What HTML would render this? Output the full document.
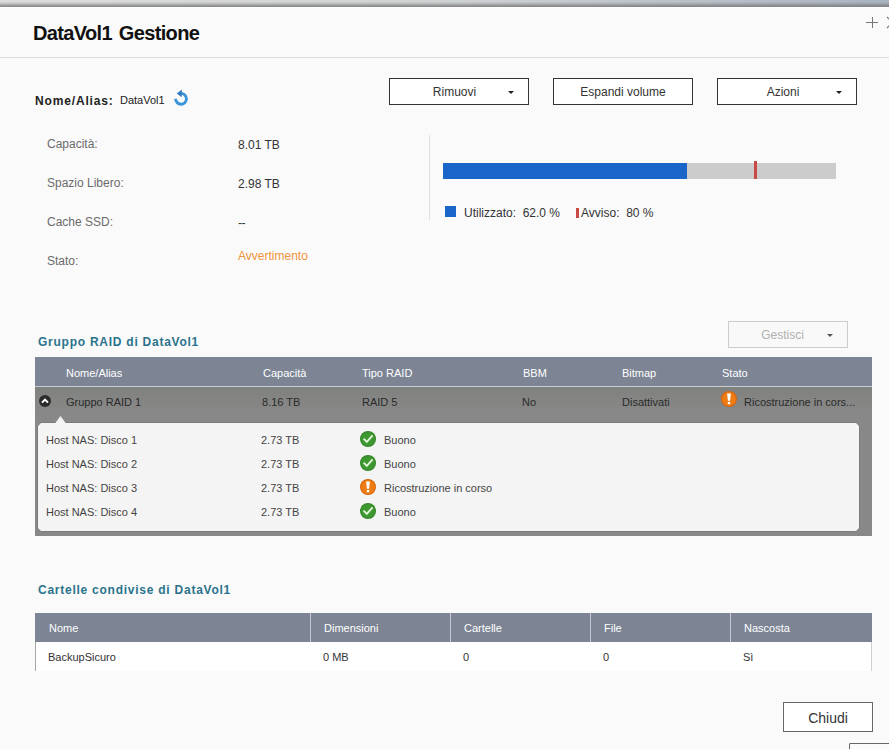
<!DOCTYPE html>
<html><head><meta charset="utf-8">
<style>
*{margin:0;padding:0;box-sizing:border-box}
html,body{width:889px;height:749px;overflow:hidden;background:#fafafa;font-family:"Liberation Sans",sans-serif;color:#333}
.a{position:absolute;white-space:nowrap}
#topbar{position:absolute;left:0;top:0;width:889px;height:8px;
 background:linear-gradient(to bottom,rgba(255,255,255,0) 0,rgba(255,255,255,0) 2px,rgba(0,0,0,0) 2px),linear-gradient(to right,#dcdcdc,#cfd2d3 50%,#a9b3c0)}
#topshade{position:absolute;left:0;top:0;width:889px;height:7px;background:linear-gradient(to bottom,rgba(120,120,120,0) 0,rgba(120,120,120,0) 2px,rgba(120,120,120,.9) 7px)}
#topwhite{position:absolute;left:0;top:7px;width:889px;height:1px;background:#fff}
.title{left:33px;top:22px;font-size:20px;font-weight:bold;color:#111;letter-spacing:-0.65px;word-spacing:2px}
.hr{position:absolute;left:0;top:57px;width:889px;height:1px;background:#dcdcdc}
.btn{position:absolute;height:27px;background:#fff;border:1px solid #333;font-size:12px;color:#333;text-align:center;line-height:25px}
.caret{position:absolute;width:0;height:0;border-left:3px solid transparent;border-right:3px solid transparent;border-top:3px solid #222}
.lbl{font-size:12px;color:#6b6b6b}
.val{font-size:12px;color:#333}
.sect{font-size:12px;font-weight:bold;color:#2a738c;letter-spacing:0.75px}
.th{font-size:11px;color:#fff}
.td{font-size:11px;color:#444}
</style></head><body>
<div id="topbar"></div><div id="topshade"></div><div id="topwhite"></div>
<div class="a title">DataVol1 Gestione</div>
<div class="hr"></div>

<!-- close/plus -->
<div style="position:absolute;left:866px;top:22px;width:12px;height:1px;background:#777"></div>
<div style="position:absolute;left:872px;top:17px;width:1px;height:11px;background:#777"></div>
<svg class="a" style="left:880px;top:10px" width="9" height="25" viewBox="880 10 9 25"><path d="M887 17 L898 28 M887 28 L898 17" stroke="#777" stroke-width="1.2"/></svg>

<div class="a" style="left:35px;top:94px;font-size:12px;font-weight:bold;color:#222;letter-spacing:0.85px">Nome/Alias:</div>
<div class="a" style="left:120px;top:94px;font-size:11px;color:#222">DataVol1</div>
<svg class="a" style="left:168px;top:86px" width="26" height="24" viewBox="168 86 26 24"><path d="M175.6 98.8 A5.4 5.4 0 1 0 181 93.4" stroke="#3a94da" stroke-width="2.9" fill="none"/><path d="M176.8 93.4 L181.9 89.6 L181.7 97.2 Z" fill="#3379c0"/></svg>

<div class="btn" style="left:389px;top:78px;width:140px;padding-right:9px;line-height:27px">Rimuovi</div>
<div class="caret" style="left:508px;top:91px"></div>
<div class="btn" style="left:553px;top:78px;width:140px;line-height:27px">Espandi volume</div>
<div class="btn" style="left:717px;top:78px;width:140px;padding-right:8px;line-height:27px">Azioni</div>
<div class="caret" style="left:836px;top:91px"></div>

<div class="a lbl" style="left:47px;top:137px">Capacità:</div>
<div class="a lbl" style="left:47px;top:176px">Spazio Libero:</div>
<div class="a lbl" style="left:47px;top:215px">Cache SSD:</div>
<div class="a lbl" style="left:47px;top:254px">Stato:</div>
<div class="a val" style="left:238px;top:138px">8.01 TB</div>
<div class="a val" style="left:238px;top:177px">2.98 TB</div>
<div class="a val" style="left:238px;top:216px;letter-spacing:-0.6px">--</div>
<div class="a val" style="left:238px;top:249px;color:#f0943a">Avvertimento</div>

<div style="position:absolute;left:429px;top:135px;width:1px;height:85px;background:#e0e0e0"></div>
<div style="position:absolute;left:443px;top:163px;width:393px;height:16px;background:#cccccc"></div>
<div style="position:absolute;left:443px;top:163px;width:244px;height:16px;background:#1a66c8"></div>
<div style="position:absolute;left:754px;top:161px;width:3px;height:18px;background:#c94a44"></div>
<div style="position:absolute;left:445px;top:206px;width:11px;height:11px;background:#1a66c8"></div>
<div class="a val" style="left:464px;top:206px">Utilizzato:&nbsp; 62.0 %</div>
<div style="position:absolute;left:576px;top:208px;width:3px;height:10px;background:#c94a44"></div>
<div class="a val" style="left:581px;top:206px">Avviso:&nbsp; 80 %</div>

<div class="a sect" style="left:38px;top:335px">Gruppo RAID di DataVol1</div>
<div class="btn" style="left:728px;top:321px;width:120px;height:27px;border-color:#ccc;color:#b0b0b0;background:#f9f9f9;padding-right:11px;line-height:26px">Gestisci</div>
<div class="caret" style="left:827px;top:334px;border-top-color:#555"></div>


<!-- RAID table -->
<div style="position:absolute;left:35px;top:357px;width:837px;height:29px;background:#7d8595"></div>
<div style="position:absolute;left:35px;top:386px;width:837px;height:1px;background:#c9ccd2"></div>
<div style="position:absolute;left:35px;top:387px;width:837px;height:149px;background:linear-gradient(to bottom,#7f817e 0,#858684 14px,#878887 30px)"></div>
<div class="a th" style="left:66px;top:367px">Nome/Alias</div>
<div class="a th" style="left:263px;top:367px">Capacità</div>
<div class="a th" style="left:362px;top:367px">Tipo RAID</div>
<div class="a th" style="left:523px;top:367px">BBM</div>
<div class="a th" style="left:622px;top:367px">Bitmap</div>
<div class="a th" style="left:722px;top:367px">Stato</div>
<div style="position:absolute;left:39px;top:395px;width:12px;height:12px;border-radius:50%;background:#2b2b2b"></div>
<svg style="position:absolute;left:39px;top:395px" width="12" height="12" viewBox="0 0 12 12"><path d="M3 7.6 L6 4.6 L9 7.6" stroke="#fff" stroke-width="2" fill="none"/></svg>
<div class="a td" style="left:66px;top:396px;color:#2a2a2a">Gruppo RAID 1</div>
<div class="a td" style="left:262px;top:396px;color:#2a2a2a">8.16 TB</div>
<div class="a td" style="left:362px;top:396px;color:#2a2a2a">RAID 5</div>
<div class="a td" style="left:522px;top:396px;color:#2a2a2a">No</div>
<div class="a td" style="left:622px;top:396px;color:#2a2a2a">Disattivati</div>
<svg class="a" style="left:721px;top:391px" width="16" height="16" viewBox="0 0 16 16"><circle cx="8" cy="8" r="8" fill="#d8640a"/><circle cx="8" cy="8" r="7" fill="#ee7b14"/><path d="M6.1 2.6 L9.9 2.6 L9.1 9.8 L6.9 9.8 Z" fill="#fff"/><rect x="6.8" y="10.9" width="2.4" height="2.3" fill="#fff"/></svg>
<div class="a td" style="left:744px;top:396px;color:#2a2a2a">Ricostruzione in cors...</div>

<div style="position:absolute;left:37px;top:422px;width:823px;height:110px;background:#7b7d7c;clip-path:polygon(4px 0,calc(100% - 4px) 0,100% 4px,100% calc(100% - 5px),calc(100% - 5px) 100%,5px 100%,0 calc(100% - 5px),0 4px)"></div>
<div style="position:absolute;left:38px;top:423px;width:821px;height:108px;background:#f4f4f4;clip-path:polygon(3px 0,calc(100% - 3px) 0,100% 3px,100% calc(100% - 3px),calc(100% - 3px) 100%,3px 100%,0 calc(100% - 3px),0 3px)"></div>
<svg class="a" style="left:55px;top:416px" width="11" height="8" viewBox="0 0 11 8"><path d="M0 7.5 L5.5 0 L11 7.5 Z" fill="#f4f4f4"/></svg>

<div class="a td" style="left:46px;top:434px">Host NAS: Disco 1</div>
<div class="a td" style="left:46px;top:458px">Host NAS: Disco 2</div>
<div class="a td" style="left:46px;top:482px">Host NAS: Disco 3</div>
<div class="a td" style="left:46px;top:506px">Host NAS: Disco 4</div>
<div class="a td" style="left:261px;top:434px">2.73 TB</div>
<div class="a td" style="left:261px;top:458px">2.73 TB</div>
<div class="a td" style="left:261px;top:482px">2.73 TB</div>
<div class="a td" style="left:261px;top:506px">2.73 TB</div>
<svg class="a ok" style="left:360px;top:431px" width="16" height="16" viewBox="0 0 16 16"><circle cx="8" cy="8" r="8" fill="#2f8424"/><circle cx="8" cy="8" r="7" fill="#3c982f"/><path d="M3.6 7.6 L6.8 10.9 L12.6 4.3" stroke="#e2f7d8" stroke-width="1.9" fill="none"/></svg>
<svg class="a ok" style="left:360px;top:455px" width="16" height="16" viewBox="0 0 16 16"><circle cx="8" cy="8" r="8" fill="#2f8424"/><circle cx="8" cy="8" r="7" fill="#3c982f"/><path d="M3.6 7.6 L6.8 10.9 L12.6 4.3" stroke="#e2f7d8" stroke-width="1.9" fill="none"/></svg>
<svg class="a" style="left:360px;top:479px" width="16" height="16" viewBox="0 0 16 16"><circle cx="8" cy="8" r="8" fill="#d8640a"/><circle cx="8" cy="8" r="7" fill="#ee7b14"/><path d="M6.1 2.6 L9.9 2.6 L9.1 9.8 L6.9 9.8 Z" fill="#fff"/><rect x="6.8" y="10.9" width="2.4" height="2.3" fill="#fff"/></svg>
<svg class="a ok" style="left:360px;top:503px" width="16" height="16" viewBox="0 0 16 16"><circle cx="8" cy="8" r="8" fill="#2f8424"/><circle cx="8" cy="8" r="7" fill="#3c982f"/><path d="M3.6 7.6 L6.8 10.9 L12.6 4.3" stroke="#e2f7d8" stroke-width="1.9" fill="none"/></svg>
<div class="a td" style="left:384px;top:434px">Buono</div>
<div class="a td" style="left:384px;top:458px">Buono</div>
<div class="a td" style="left:384px;top:482px">Ricostruzione in corso</div>
<div class="a td" style="left:384px;top:506px">Buono</div>

<!-- shared folders -->
<div class="a sect" style="left:38px;top:583px">Cartelle condivise di DataVol1</div>
<div style="position:absolute;left:35px;top:613px;width:837px;height:29px;background:#7d8595"></div>
<div style="position:absolute;left:35px;top:642px;width:837px;height:29px;background:#fff;border-left:1px solid #a8a8a8;border-right:1px solid #cfcfcf"></div>
<div style="position:absolute;left:310px;top:613px;width:1px;height:29px;background:#c4c8d0"></div>
<div style="position:absolute;left:450px;top:613px;width:1px;height:29px;background:#c4c8d0"></div>
<div style="position:absolute;left:590px;top:613px;width:1px;height:29px;background:#c4c8d0"></div>
<div style="position:absolute;left:730px;top:613px;width:1px;height:29px;background:#c4c8d0"></div>
<div class="a th" style="left:49px;top:622px">Nome</div>
<div class="a th" style="left:324px;top:622px">Dimensioni</div>
<div class="a th" style="left:464px;top:622px">Cartelle</div>
<div class="a th" style="left:604px;top:622px">File</div>
<div class="a th" style="left:744px;top:622px">Nascosta</div>
<div class="a td" style="left:48px;top:651px;color:#333">BackupSicuro</div>
<div class="a td" style="left:323px;top:651px;color:#333">0 MB</div>
<div class="a td" style="left:463px;top:651px;color:#333">0</div>
<div class="a td" style="left:603px;top:651px;color:#333">0</div>
<div class="a td" style="left:743px;top:651px;color:#333">Sì</div>

<div class="btn" style="left:783px;top:702px;width:90px;height:30px;border-color:#666;font-size:14px;line-height:31px">Chiudi</div>
<div style="position:absolute;left:849px;top:743px;width:60px;height:20px;background:#fafafa;border:1px solid #666;border-radius:1px"></div>
</body></html>
